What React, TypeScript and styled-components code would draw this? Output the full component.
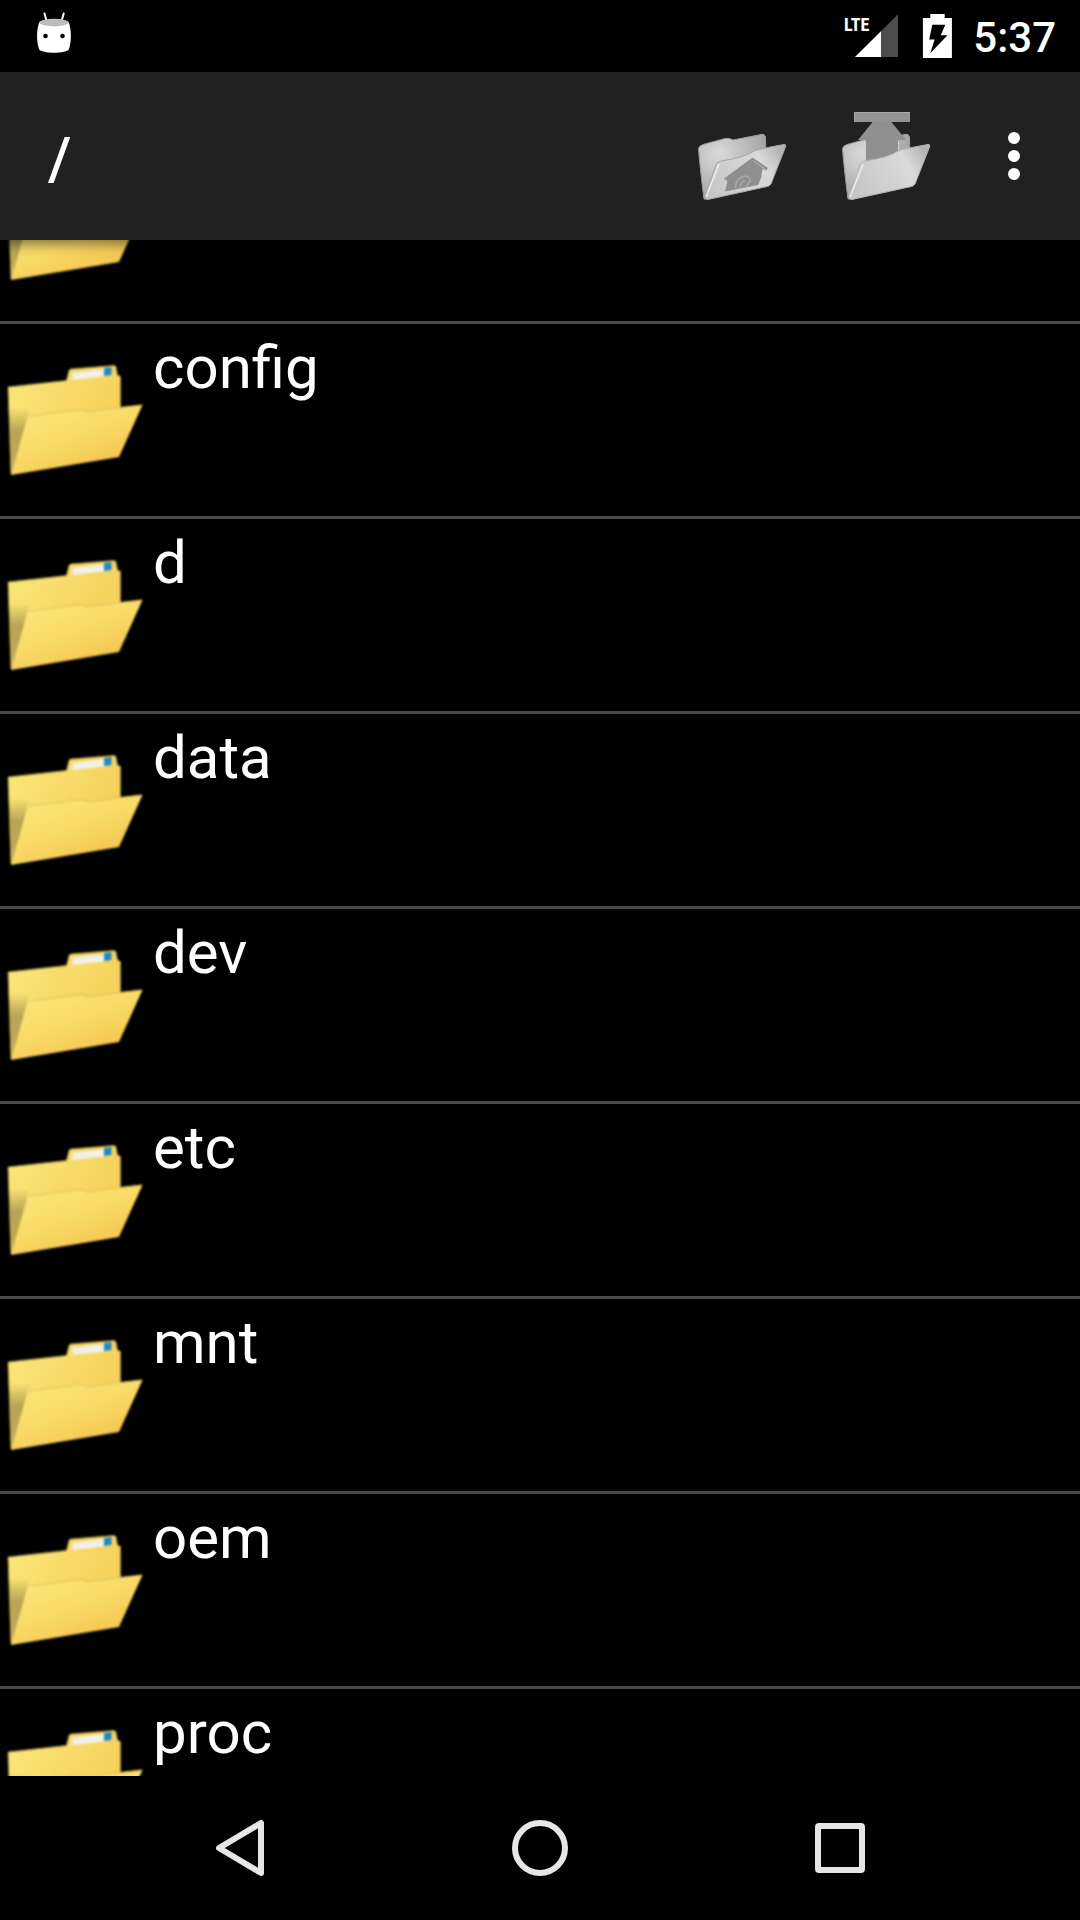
import React, { useLayoutEffect, useRef } from "react";
import styled, { createGlobalStyle } from "styled-components";

const GlobalStyle = createGlobalStyle`
  *, *::before, *::after { box-sizing: border-box; }
  html, body { margin: 0; background: #000; }
  body { font-family: Roboto, "Noto Sans", sans-serif; color: #fff; }
`;

const Screen = styled.div`
  display: flex;
  flex-direction: column;
  height: 100vh;
  overflow: hidden;
  background: #000;
`;

const StatusBar = styled.header`
  display: flex;
  flex: none;
  align-items: center;
  height: 72px;
  padding: 0 24px 0 30px;
`;

const StatusGroup = styled.div`
  display: flex;
  align-items: center;
  margin-left: auto;
`;

const StatusIcon = styled.svg`
  display: block;
  flex: none;
`;

const NetworkLabel = styled.text`
  font-family: "Roboto Condensed", "Open Sans Condensed", "Liberation Sans Narrow", Roboto, sans-serif;
  font-size: 18px;
  font-weight: 700;
  fill: #fff;
`;

const Clock = styled.time`
  margin-left: 18px;
  padding-top: 4px;
  font-size: 42px;
  line-height: 48px;
  font-weight: 500;
`;

const Toolbar = styled.div`
  position: relative;
  z-index: 1;
  display: flex;
  flex: none;
  align-items: center;
  height: 168px;
  padding: 0 10px 0 48px;
  background: #212121;
  box-shadow: 0 4px 12px rgba(0, 0, 0, 0.5);
`;

const Title = styled.h1`
  flex: 1;
  margin: 0;
  padding-top: 6px;
  font-size: 60px;
  line-height: 72px;
  font-weight: 500;
`;

const IconButton = styled.button<{ $width: number }>`
  display: flex;
  flex: none;
  align-items: center;
  justify-content: center;
  width: ${(p) => p.$width}px;
  height: 144px;
  padding: 0;
  border: 0;
  background: transparent;
  cursor: pointer;
`;

const FileList = styled.ul`
  flex: 1;
  min-height: 0;
  margin: 0;
  padding: 0;
  list-style: none;
  overflow-y: auto;
  scrollbar-width: none;
`;

const FileItem = styled.li`
  border-bottom: 3px solid #4a4a4a;
`;

const FileRow = styled.button`
  display: flex;
  align-items: center;
  gap: 9px;
  width: 100%;
  height: 192px;
  padding: 0;
  border: 0;
  background: transparent;
  color: inherit;
  font: inherit;
  text-align: left;
  cursor: pointer;
`;

const FileName = styled.span`
  flex: 1;
  align-self: flex-start;
  padding-top: 8px;
  font-size: 60px;
  line-height: 72px;
`;

const NavBar = styled.nav`
  display: flex;
  flex: none;
  align-items: center;
  justify-content: center;
  height: 144px;
`;

const NavButton = styled(IconButton)`
  flex: 0 1 300px;
`;

function AndroidIcon() {
  return (
    <StatusIcon width="48" height="72" viewBox="30 0 48 72" aria-hidden="true">
      <path d="M44.5 13.5l2.2 8M63.7 13.5l-2.2 8" stroke="#fff" strokeWidth="2" strokeLinecap="round" />
      <path d="M39 23c2-5 28-5 30 0c2.500 8 2.500 18 0 26c-2 5-28 5-30 0c-2.600-8-2.600-18 0-26z" fill="#fff" />
      <ellipse cx="54" cy="22.600" rx="14.600" ry="3.800" fill="#bdbdbd" />
      <circle cx="45.500" cy="36" r="2.300" fill="#000" />
      <circle cx="62.500" cy="36" r="2.300" fill="#000" />
    </StatusIcon>
  );
}

function SignalIcon() {
  return (
    <StatusIcon width="58" height="72" viewBox="843 0 58 72" role="img" aria-label="LTE signal">
      <path d="M898 14.300V57H855z" fill="#4d4d4d" />
      <path d="M881 31.200V57H855z" fill="#fff" />
      <NetworkLabel x="844" y="31">LTE</NetworkLabel>
    </StatusIcon>
  );
}

function BatteryIcon() {
  return (
    <StatusIcon width="54" height="72" viewBox="901 0 54 72" role="img" aria-label="Battery charging">
      <path d="M930.300 14h14.400v4h7.200v40h-29V18h7.400z" fill="#fff" />
      <path d="M932.300 24.700h13l-4.600 10.500h6.800l-17.300 18l4.500-13.600h-5.500z" fill="#000" />
    </StatusIcon>
  );
}

function FolderIcon() {
  return (
    <StatusIcon width="144" height="144" viewBox="0 0 144 144" aria-hidden="true">
      <defs>
        <linearGradient id="folderBack" x1="0" y1="0" x2="1" y2="0.6">
          <stop offset="0" stopColor="#fae97c" />
          <stop offset="1" stopColor="#f5cc56" />
        </linearGradient>
        <linearGradient id="folderFront" x1="0.100" y1="0" x2="0.800" y2="1">
          <stop offset="0" stopColor="#fae87a" />
          <stop offset="0.500" stopColor="#f9da67" />
          <stop offset="1" stopColor="#f3bd45" />
        </linearGradient>
        <linearGradient id="folderFold" x1="0" y1="0" x2="0" y2="1">
          <stop offset="0" stopColor="#a8964c" stopOpacity="0" />
          <stop offset="0.350" stopColor="#a8964c" stopOpacity="0.800" />
          <stop offset="1" stopColor="#c9b05a" />
        </linearGradient>
        <filter id="folderSoft" x="-5%" y="-5%" width="110%" height="110%" colorInterpolationFilters="sRGB">
          <feGaussianBlur stdDeviation="0.900" />
        </filter>
      </defs>
      <g filter="url(#folderSoft)">
        <path d="M8 39L66.500 32.500L69 22.500Q69.500 21 71 21L114 17.500Q115.500 17.500 116 19L117.500 27L120.500 28.500V80L11 126z" fill="url(#folderBack)" stroke="#a18e43" strokeWidth="0.800" />
        <path d="M72.500 25L104 21V28.500L72.500 32z" fill="#f2f0e8" />
        <path d="M104 20L111.500 19V27L104 28z" fill="#2388c2" />
        <path d="M8.500 60L29 62L27 70L12 126z" fill="url(#folderFold)" />
        <path d="M28 69Q28.500 67 31 66.600L82 61.500L88 64L120 59.500L142.500 57L119 109L11 127z" fill="url(#folderFront)" />
        <path d="M29 68L82 61.500L88 64L120 59.500L142 57" fill="none" stroke="#dfc35b" strokeWidth="1.200" />
      </g>
    </StatusIcon>
  );
}

function GreyFolderDefs({ id }: { id: string }) {
  return (
    <defs>
      <radialGradient id={`${id}Back`} cx="0.300" cy="0.300" r="0.700">
        <stop offset="0" stopColor="#dadada" />
        <stop offset="1" stopColor="#a6a6a6" />
      </radialGradient>
      <linearGradient id={`${id}Front`} x1="0" y1="0.700" x2="1" y2="0.300">
        <stop offset="0" stopColor="#c6c6c6" />
        <stop offset="0.750" stopColor="#dadada" />
        <stop offset="1" stopColor="#b4b4b4" />
      </linearGradient>
      <filter id={`${id}Soft`} x="-5%" y="-5%" width="110%" height="110%" colorInterpolationFilters="sRGB">
        <feGaussianBlur stdDeviation="0.600" />
      </filter>
    </defs>
  );
}

const greyBack =
  "M4.500 41Q4.500 38 9 36.500L31 30.500Q35 29.500 39 32L67 26.500Q70.500 25.500 71.500 29L72 50L14 91H10Q6 60 4.500 41z";
const greyFront =
  "M22 57Q23.500 53.500 27 53Q50 50 61 42.500Q70 40 90 36.500Q92.500 36 91.500 39L77 76Q75.500 78.500 71 79L14 91.500Q10 91.500 11 88z";

function HomeFolderIcon() {
  return (
    <StatusIcon width="96" height="96" viewBox="0 0 96 96" aria-hidden="true">
      <GreyFolderDefs id="home" />
      <g filter="url(#homeSoft)">
        <path d={greyBack} fill="url(#homeBack)" stroke="#9b9b9b" strokeWidth="1" />
        <path d={greyFront} fill="url(#homeFront)" stroke="#a4a4a4" strokeWidth="1" />
        <path d="M25 56L12 89" stroke="#eee" strokeWidth="1.500" />
        <path d="M58.500 49.500L74 60L72 62.500L68.500 61L67 70L64 77L31 83.500L33.500 73L30 70.500z" fill="#8f8f8f" />
        <path d="M41.500 80Q41 71.500 49 68.500Q57.500 67 55.500 74L52 79M46 79Q47 73.500 51 73M59 52.500L71.500 61.500" fill="none" stroke="#a8a8a8" strokeWidth="1.500" />
      </g>
    </StatusIcon>
  );
}

function UpFolderIcon() {
  return (
    <StatusIcon width="96" height="96" viewBox="0 0 96 96" aria-hidden="true">
      <GreyFolderDefs id="up" />
      <g filter="url(#upSoft)">
        <path d={greyBack} fill="url(#upBack)" stroke="#9b9b9b" strokeWidth="1" />
        <path d="M27.500 60V32H20L35 13.500H53L68 32H60V50z" fill="#909090" />
        <path d="M27.500 58V33M60.500 47V33" stroke="#d0d0d0" strokeWidth="1" />
        <path d="M16 4H72V14H16z" fill="#949494" />
        <path d="M16.500 14V4.500H72" fill="none" stroke="#a8a8a8" />
        <path d={greyFront} fill="url(#upFront)" stroke="#b4b4b4" strokeWidth="1" />
        <path d="M25 56L12 89" stroke="#eee" strokeWidth="1.500" />
      </g>
    </StatusIcon>
  );
}

function MoreIcon() {
  return (
    <StatusIcon width="12" height="48" viewBox="0 0 12 48" fill="#fff" aria-hidden="true">
      <circle cx="6" cy="6" r="6" />
      <circle cx="6" cy="24" r="6" />
      <circle cx="6" cy="42" r="6" />
    </StatusIcon>
  );
}

function NavIcon({ children }: { children: React.ReactNode }) {
  return (
    <StatusIcon width="60" height="60" viewBox="0 0 60 60" fill="none" stroke="#e6e6e6" strokeWidth="6" strokeLinejoin="round" aria-hidden="true">
      {children}
    </StatusIcon>
  );
}

const folders = ["", "config", "d", "data", "dev", "etc", "mnt", "oem", "proc"];
const initialScroll = 111;

export default function App() {
  const list = useRef<HTMLUListElement>(null);

  useLayoutEffect(() => {
    if (list.current) list.current.scrollTop = initialScroll;
  }, []);

  return (
    <Screen>
      <GlobalStyle />
      <StatusBar>
        <AndroidIcon />
        <StatusGroup>
          <SignalIcon />
          <BatteryIcon />
          <Clock>5:37</Clock>
        </StatusGroup>
      </StatusBar>
      <Toolbar>
        <Title>/</Title>
        <IconButton type="button" $width={144} aria-label="Home folder">
          <HomeFolderIcon />
        </IconButton>
        <IconButton type="button" $width={144} aria-label="Up one level">
          <UpFolderIcon />
        </IconButton>
        <IconButton type="button" $width={112} aria-label="More options">
          <MoreIcon />
        </IconButton>
      </Toolbar>
      <FileList ref={list}>
        {folders.map((name) => (
          <FileItem key={name}>
            <FileRow type="button" aria-label={name || "Folder"}>
              <FolderIcon />
              <FileName>{name}</FileName>
            </FileRow>
          </FileItem>
        ))}
      </FileList>
      <NavBar>
        <NavButton type="button" $width={300} aria-label="Back">
          <NavIcon>
            <path d="M51 5V55L9 30z" />
          </NavIcon>
        </NavButton>
        <NavButton type="button" $width={300} aria-label="Home">
          <NavIcon>
            <circle cx="30" cy="30" r="25" />
          </NavIcon>
        </NavButton>
        <NavButton type="button" $width={300} aria-label="Recent apps">
          <NavIcon>
            <rect x="8" y="8" width="44" height="44" rx="1" />
          </NavIcon>
        </NavButton>
      </NavBar>
    </Screen>
  );
}
